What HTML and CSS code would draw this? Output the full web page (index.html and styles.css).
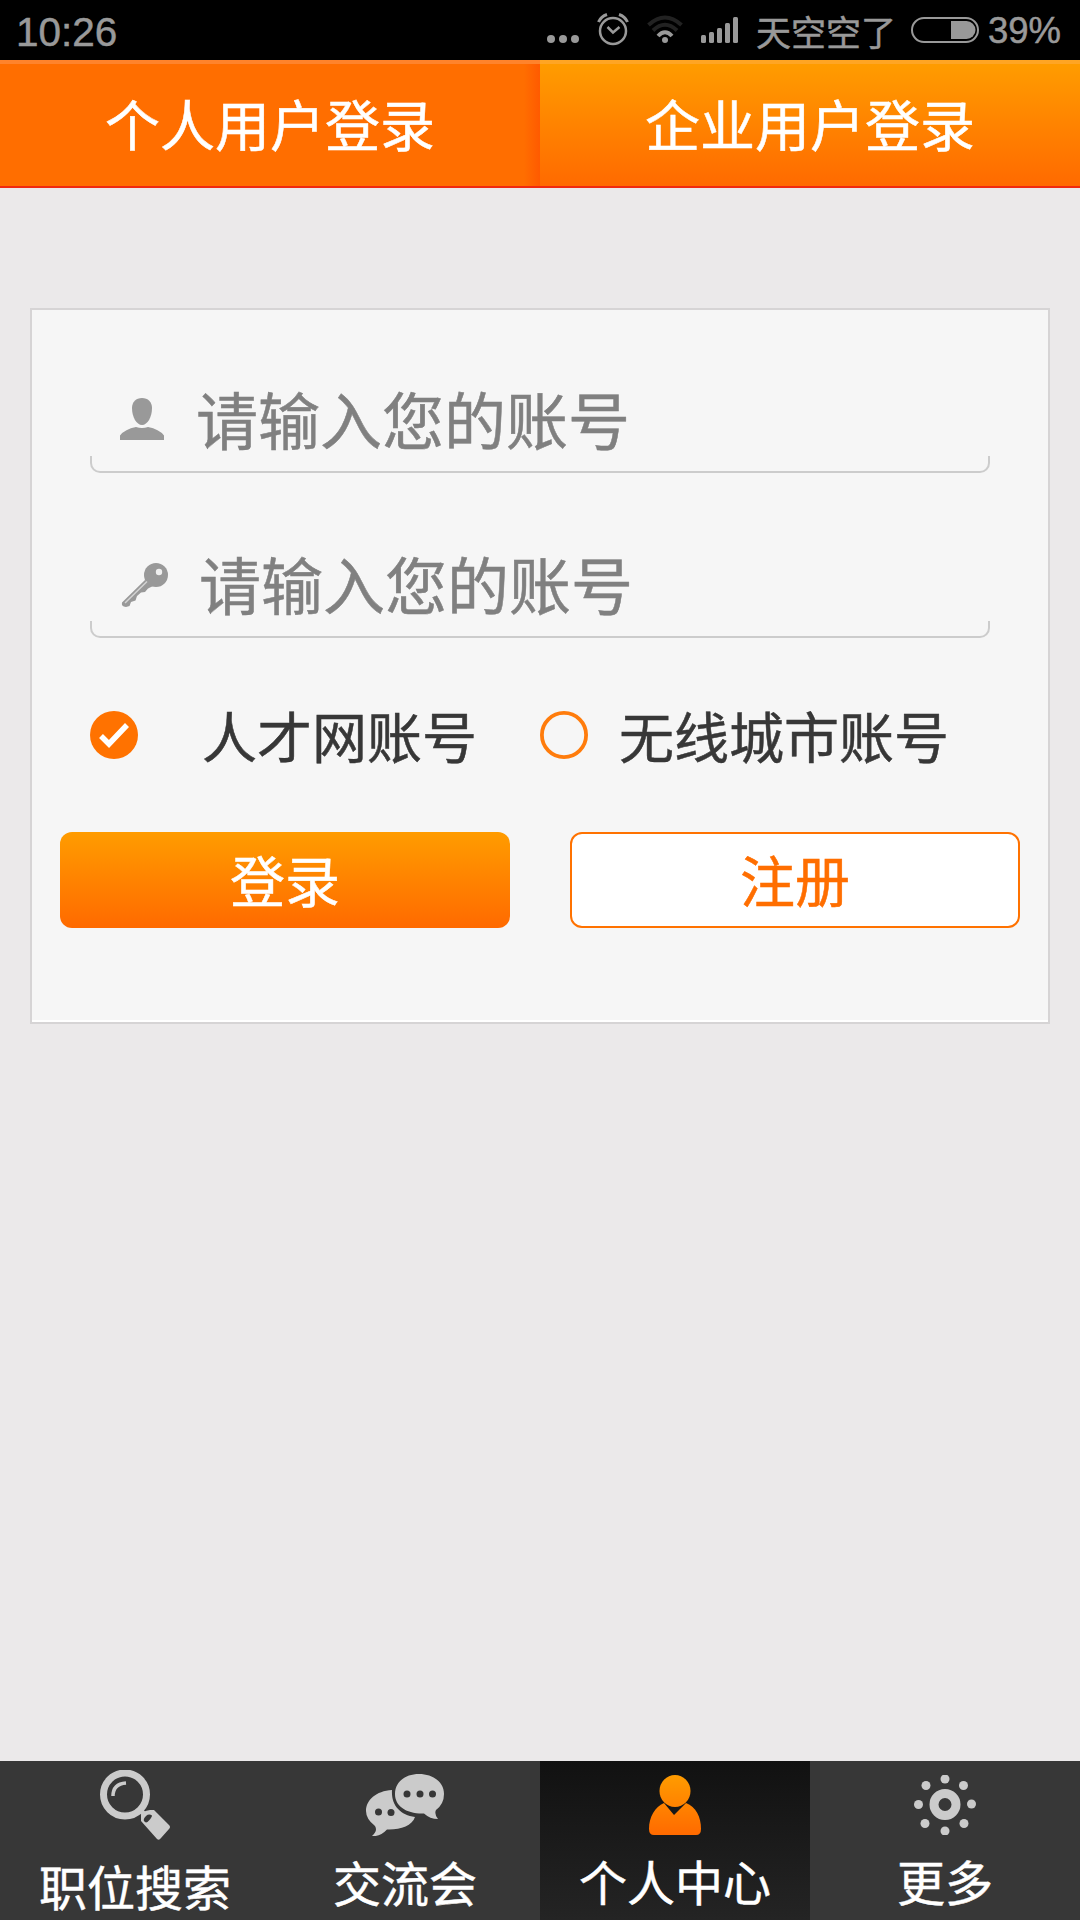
FILE: index.html
```html
<!DOCTYPE html>
<html lang="zh-CN">
<head>
    <meta charset="UTF-8">
    <meta name="viewport" content="width=device-width, initial-scale=1.0">
    <title>个人用户登录</title>
    <link rel="stylesheet" href="styles.css">
</head>
<body>
    <div class="status-bar">
        <span class="clock">10:26</span>
        <div class="status-right">
            <svg class="dots" width="32" height="60" viewBox="0 0 32 60">
                <circle cx="4" cy="39" r="4"/><circle cx="16" cy="39" r="4"/><circle cx="28" cy="39" r="4"/>
            </svg>
            <svg class="alarm" width="32" height="60" viewBox="0 0 32 60">
                <circle cx="16" cy="31" r="13"/>
                <path d="M10.5 27l5.5 5.5 6.5-5.5"/>
                <path d="M1.5 22Q4 16.500 10 14.500M30.500 22Q28 16.500 22 14.500" stroke-width="3"/>
            </svg>
            <svg class="wifi" width="36" height="60" viewBox="0 0 36 60">
                <path d="M1.500 25Q18 10 34.500 25M6 30.500Q18 19 30 30.500" stroke="#222"/>
                <path d="M11 36Q18 28.500 25 36"/>
                <circle cx="18" cy="40" r="3"/>
            </svg>
            <svg class="signal" width="37" height="60" viewBox="0 0 37 60">
                <rect x="0" y="35" width="5" height="8" rx="1.500"/>
                <rect x="8" y="32" width="5" height="11" rx="1.500"/>
                <rect x="16" y="28" width="5" height="15" rx="1.500"/>
                <rect x="24" y="23" width="5" height="20" rx="1.500"/>
                <rect x="32" y="17" width="5" height="26" rx="1.500"/>
            </svg>
            <span class="carrier">天空空了</span>
            <svg class="battery" width="68" height="60" viewBox="0 0 68 60">
                <rect x="1" y="18" width="66" height="24" rx="12" fill="none" stroke="#999" stroke-width="2"/>
                <path d="M40 21h15.500a9 9 0 0 1 0 18H40z" fill="#999"/>
            </svg>
            <span class="percent">39%</span>
        </div>
    </div>

    <div class="tabs">
        <div class="tab active">个人用户登录</div>
        <div class="tab">企业用户登录</div>
    </div>

    <form class="card">
        <div class="field">
            <svg class="field-icon" width="48" height="44" viewBox="0 0 48 44">
                <path d="M22 0C28 0 32 4 32 10C32 19 27.500 27 22 27S12 19 12 10C12 4 16 0 22 0z"/>
                <path d="M0 42v-4.500Q5 31 16 29Q22 31 28 29Q39 31 44 37.500V42z"/>
            </svg>
            <input type="text" placeholder="请输入您的账号">
        </div>
        <div class="field second">
            <svg class="field-icon" width="48" height="44" viewBox="0 0 48 44">
                <path d="M25 17L2 39.500q-1 4 4 4.500l3.500-1 1.500-4 4.500-1.500L17 33l4-3.500 4-.500 3-3.500 7-3.500z"/>
                <circle cx="36" cy="12" r="12"/>
                <circle cx="39" cy="9" r="3.200" fill="#f0f0f0"/>
                <path d="M5 40L27 18.500" stroke="#d4d4d4" stroke-width="1.500"/>
            </svg>
            <input type="text" placeholder="请输入您的账号">
        </div>

        <div class="radios">
            <label class="radio first">
                <svg width="48" height="48" viewBox="0 0 48 48">
                    <circle cx="24" cy="24" r="24" fill="#ff7200"/>
                    <path d="M11 25l8 8 18-19" fill="none" stroke="#fff" stroke-width="5.500"/>
                </svg>
                <span>人才网账号</span>
            </label>
            <label class="radio">
                <svg width="48" height="48" viewBox="0 0 48 48">
                    <circle cx="24" cy="24" r="22.100" fill="none" stroke="#ff7c0c" stroke-width="3.800"/>
                </svg>
                <span>无线城市账号</span>
            </label>
        </div>

        <div class="buttons">
            <button type="button" class="btn login">登录</button>
            <button type="button" class="btn register">注册</button>
        </div>
    </form>

    <div class="navbar">
        <div class="nav-item search">
            <svg width="70" height="70" viewBox="0 0 70 70">
                <circle cx="25" cy="24.500" r="21.500" fill="none" stroke="#cbcbcb" stroke-width="7"/>
                <path d="M13 26q0-12 13-13" fill="none" stroke="#cbcbcb" stroke-width="3.500"/>
                <path d="M38 38l6 6" stroke="#cbcbcb" stroke-width="5"/>
                <path fill-rule="evenodd" fill="#cbcbcb" d="M41 51V45q1-4 9-5h4L69 55q2 2 0 4L61 68q-2 3-4 1zM44 51q2 3 5-.500t3-5q-3-2-6 .500t-2 5z"/>
            </svg>
            <span>职位搜索</span>
        </div>
        <div class="nav-item chat">
            <svg width="78" height="62" viewBox="0 0 78 62">
                <path fill="#cbcbcb" d="M26 16C10 17 0 26 0 37q0 8 9 15 3 5-3 10 8 1 15-6.500C34 56 46 52 49 43 34 41 25 31 26 16z"/>
                <path fill="#cbcbcb" d="M53 0C39 0 29 8 29 20s11 20 29 19.500Q64 45 72 45q-4-5-2-9 8-6 8-16C78 8 67 0 53 0z"/>
                <g fill="#373737">
                    <circle cx="41" cy="20" r="3.500"/><circle cx="54" cy="20" r="3.500"/><circle cx="66.500" cy="20" r="3.500"/>
                    <circle cx="12.500" cy="38" r="3.500"/><circle cx="25" cy="38.500" r="3.500"/>
                </g>
            </svg>
            <span>交流会</span>
        </div>
        <div class="nav-item active">
            <svg width="52" height="60" viewBox="0 0 52 60">
                <defs>
                    <linearGradient id="person" gradientUnits="userSpaceOnUse" x1="0" y1="0" x2="0" y2="60">
                        <stop offset="0" stop-color="#ff9c00"/>
                        <stop offset="1" stop-color="#ff6a00"/>
                    </linearGradient>
                </defs>
                <g fill="url(#person)">
                    <ellipse cx="26" cy="16" rx="15.500" ry="16"/>
                    <path d="M15 28l10 12 12-12C47 32 52 42 52 54q0 6-5 6H5q-5 0-5-6C0 42 6 32 15 28z"/>
                </g>
            </svg>
            <span>个人中心</span>
        </div>
        <div class="nav-item">
            <svg width="62" height="60" viewBox="0 0 62 60" fill="#cbcbcb">
                <circle cx="31" cy="29.500" r="11" fill="none" stroke="#cbcbcb" stroke-width="9"/>
                <circle cx="31" cy="4" r="4.500"/><circle cx="49.500" cy="10.500" r="4.500"/>
                <circle cx="57.500" cy="29" r="4.500"/><circle cx="50" cy="48.500" r="4.500"/>
                <circle cx="31" cy="56" r="4.500"/><circle cx="11" cy="48.500" r="4.500"/>
                <circle cx="4.500" cy="29.500" r="4.500"/><circle cx="12" cy="10.500" r="4.500"/>
            </svg>
            <span>更多</span>
        </div>
    </div>
</body>
</html>
```

FILE: styles.css
```css
* {
    box-sizing: border-box;
}
body {
    margin: 0;
    height: 1920px;
    display: flex;
    flex-direction: column;
    background-color: #ebe9ea;
    font-family: Roboto, "Noto Sans CJK SC", sans-serif;
    -webkit-text-stroke: 0.5px;
}
svg {
    display: block;
    flex: none;
}

/* status bar */
.status-bar {
    height: 60px;
    padding: 0 17px 0 16px;
    display: flex;
    justify-content: space-between;
    background-color: #000;
    color: #999;
    line-height: 62px;
}
.clock {
    font-family: "Liberation Sans", sans-serif;
    font-size: 40.5px;
    line-height: 64px;
}
.status-right {
    display: flex;
}
.dots {
    margin-right: 18px;
    fill: #999;
}
.alarm {
    margin-right: 18px;
    fill: none;
    stroke: #999;
    stroke-width: 2.5;
}
.wifi {
    margin-right: 18px;
    fill: none;
    stroke: #999;
    stroke-width: 4;
}
.wifi circle {
    fill: #999;
    stroke: none;
}
.signal {
    margin-right: 18px;
    fill: #999;
}
.carrier {
    width: 155px;
    font-family: "Noto Sans CJK SC", sans-serif;
    font-size: 35px;
    white-space: nowrap;
}
.percent {
    width: 75px;
    margin-left: 9px;
    font-family: "Liberation Sans", sans-serif;
    font-size: 36.5px;
}

/* top tabs */
.tabs {
    height: 128px;
    display: flex;
    border-bottom: 2px solid #f02a10;
}
.tab {
    flex: 1;
    border-top: 4px solid #ffa524;
    background: linear-gradient(#ff9c00, #ff6a00);
    color: #fff;
    font-size: 55px;
    line-height: 127px;
    height: 126px;
    text-align: center;
}
.tab.active {
    border-top-color: #ff832b;
    background: linear-gradient(to left, #ff5a00, #ff6e00 16px);
}

/* login form */
.card {
    width: 1020px;
    height: 716px;
    margin: 120px auto 0;
    padding: 63px 28px 0;
    border: 2px solid #d6d4d5;
    background-color: #f6f6f6;
    box-shadow: inset 0 -2px 0 #fff;
}
.field {
    position: relative;
    height: 100px;
    margin: 0 30px 65px;
    padding: 0 0 6px 30px;
    display: flex;
    align-items: center;
}
.field::after {
    content: "";
    position: absolute;
    left: 0;
    right: 0;
    bottom: 0;
    height: 15px;
    border: 2px solid #ccc;
    border-top: none;
    border-radius: 0 0 10px 10px;
    pointer-events: none;
}
.field-icon {
    fill: #999;
}
.field input {
    width: 700px;
    height: 94px;
    margin-left: 28px;
    padding: 7px 0 0;
    border: none;
    outline: none;
    background: transparent;
    font-family: inherit;
    font-size: 62px;
}
.field.second input {
    margin-left: 31px;
}
.field input::placeholder {
    color: #808080;
    opacity: 1;
}
.radios {
    height: 80px;
    margin: -8px 30px 0;
    display: flex;
}
.radio {
    display: flex;
    align-items: center;
    color: #373737;
    font-size: 55px;
    line-height: 80px;
    white-space: nowrap;
}
.radio.first {
    width: 450px;
}
.radio span {
    margin-left: 31px;
    padding-top: 7px;
}
.radio.first span {
    margin-left: 64px;
}
.buttons {
    margin-top: 57px;
    display: flex;
    gap: 60px;
}
.btn {
    width: 450px;
    height: 96px;
    padding: 6px 0 0;
    border: none;
    border-radius: 12px;
    font-family: inherit;
    font-size: 55px;
    line-height: 90px;
}
.login {
    background: linear-gradient(#ff9c00, #ff6a00);
    color: #fff;
}
.register {
    border: 2px solid #ff7200;
    background-color: #fff;
    color: #ff6e00;
    line-height: 86px;
}

/* bottom navigation */
.navbar {
    height: 159px;
    margin-top: auto;
    display: flex;
    background-color: #373737;
}
.nav-item {
    flex: 1;
    padding-top: 14px;
    display: flex;
    flex-direction: column;
    align-items: center;
    color: #fff;
    font-size: 48px;
}
.nav-item.search {
    padding-top: 9px;
}
.nav-item.chat {
    padding-top: 13px;
}
.nav-item.active {
    background: linear-gradient(#111, #242424);
}
.nav-item span {
    margin-top: 22px;
    line-height: 56px;
}
```
